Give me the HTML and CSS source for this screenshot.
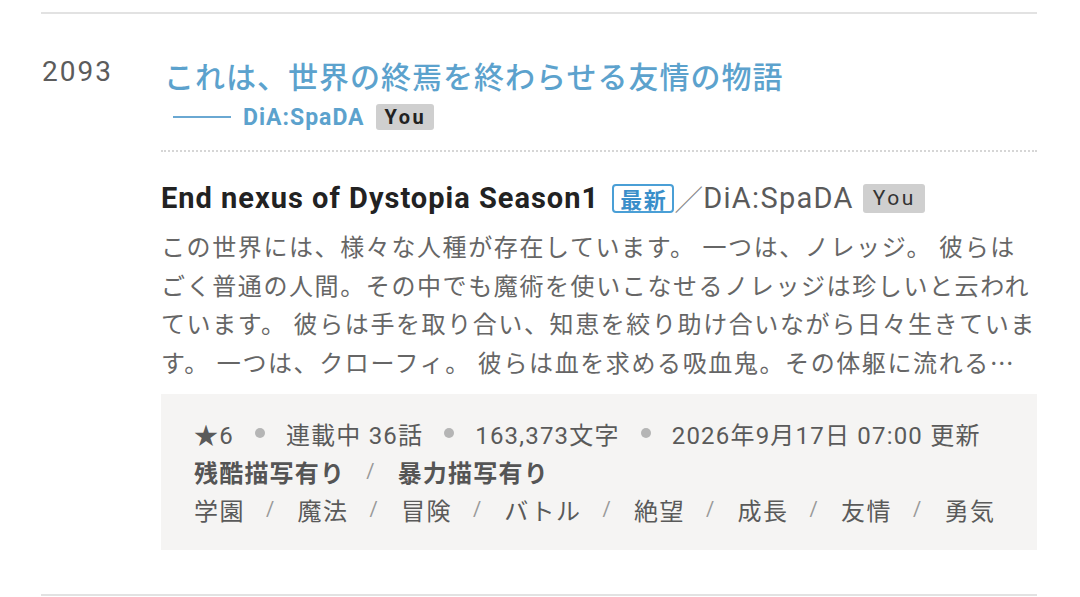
FILE: index.html
```html
<!DOCTYPE html>
<html lang="ja">
<head>
<meta charset="utf-8">
<link rel="stylesheet" href="styles.css">
</head>
<body>
<div class="list">
  <div class="item">
    <div class="rank">2093</div>
    <div class="main">
      <div class="head">
        <div class="title">これは、世界の終焉を終わらせる友情の物語</div>
        <div class="author-line">
          <span class="dash"></span>
          <span class="author">DiA:SpaDA</span>
          <span class="you you-bold">You</span>
        </div>
      </div>
      <div class="work">
        <div class="work-title">
          <span class="work-name">End nexus of Dystopia Season1</span>
          <span class="new">最新</span>
          <span class="slash">／</span>
          <span class="work-author">DiA:SpaDA</span>
          <span class="you">You</span>
        </div>
        <p class="desc">この世界には、様々な人種が存在しています。 一つは、ノレッジ。 彼らはごく普通の人間。その中でも魔術を使いこなせるノレッジは珍しいと云われています。 彼らは手を取り合い、知恵を絞り助け合いながら日々生きています。 一つは、クローフィ。 彼らは血を求める吸血鬼。その体躯に流れる血は彼らの力の源であり、決して絶やしてはならないものです。</p>
        <div class="meta">
          <div class="meta-line">
            <span>★6</span><span class="dot"></span><span>連載中 36話</span><span class="dot"></span><span>163,373文字</span><span class="dot"></span><span>2026年9月17日 07:00&nbsp;更新</span>
          </div>
          <div class="meta-line warn">
            <span>残酷描写有り</span><span class="sep">/</span><span>暴力描写有り</span>
          </div>
          <div class="meta-line tags">
            <span>学園</span><span class="sep">/</span><span>魔法</span><span class="sep">/</span><span>冒険</span><span class="sep">/</span><span>バトル</span><span class="sep">/</span><span>絶望</span><span class="sep">/</span><span>成長</span><span class="sep">/</span><span>友情</span><span class="sep">/</span><span>勇気</span>
          </div>
        </div>
      </div>
    </div>
  </div>
</div>
</body>
</html>
```

FILE: styles.css
```css
html, body {
  margin: 0;
  padding: 0;
  background: #ffffff;
}
body {
  font-family: Roboto, "Noto Sans CJK JP", sans-serif;
  color: #555;
}
.list {
  margin: 12px 43px 0 41px;
  border-top: 2px solid #e2e2e2;
  border-bottom: 2px solid #e2e2e2;
}
.item {
  display: flex;
  padding: 41px 0 44px;
}
.rank {
  width: 119px;
  flex: none;
  font-size: 28px;
  line-height: 40px;
  letter-spacing: 2px;
  color: #5c5c5c;
  padding-left: 1px;
  margin-top: -3px;
}
.main {
  flex: 1;
  min-width: 0;
}
.head {
  border-bottom: 2px dotted #d6d6d6;
  padding-bottom: 18px;
}
.title {
  font-family: "Noto Sans CJK JP", sans-serif;
  font-weight: 500;
  font-size: 30px;
  line-height: 40px;
  letter-spacing: 1px;
  color: #5ca2cd;
  padding-left: 3px;
}
.author-line {
  display: flex;
  align-items: center;
  margin-top: 7px;
  height: 30px;
}
.dash {
  display: inline-block;
  width: 58px;
  height: 0;
  border-top: 2px solid #6aa8d2;
  margin-left: 12px;
  margin-right: 12px;
}
.author {
  font-family: Roboto, sans-serif;
  font-weight: 700;
  font-size: 23px;
  color: #5ca2cd;
  letter-spacing: 1px;
}
.you {
  display: inline-block;
  background: #cfcfcf;
  color: #333;
  font-family: Roboto, sans-serif;
  font-size: 21px;
  line-height: 29px;
  padding: 0 9px 0 10px;
  letter-spacing: 2.5px;
  border-radius: 3px;
  margin-left: 11px;
}
.you-bold {
  font-weight: 700;
  color: #222;
  line-height: 26px;
  font-size: 20px;
  padding: 0 8px 0 9px;
}
.work {
  padding-top: 26px;
}
.work-title {
  display: flex;
  align-items: center;
  height: 40px;
}
.work-name {
  font-weight: 700;
  font-size: 29px;
  letter-spacing: 1px;
  color: #222;
}
.new {
  display: inline-block;
  font-family: "Noto Sans CJK JP", sans-serif;
  font-weight: 700;
  font-size: 22px;
  line-height: 25px;
  color: #3a8fca;
  border: 2px solid #4a9fd6;
  border-radius: 4px;
  padding: 0 5px 0 6px;
  margin-left: 13px;
  letter-spacing: 1.5px;
}
.slash {
  font-family: "Noto Sans CJK JP", sans-serif;
  font-size: 29px;
  color: #888;
  font-weight: 300;
  margin-left: 0;
}
.work-author {
  font-size: 29px;
  color: #5a5a5a;
  letter-spacing: 1.3px;
}
.work-title .you {
  margin-left: 9px;
}
.desc {
  margin: 9px 0 0;
  font-family: "Noto Sans CJK JP", sans-serif;
  font-size: 24px;
  line-height: 38.5px;
  letter-spacing: 1.6px;
  color: #666;
  display: -webkit-box;
  -webkit-line-clamp: 4;
  -webkit-box-orient: vertical;
  overflow: hidden;
}
.meta {
  margin-top: 13px;
  background: #f5f4f3;
  padding: 20px 20px 22px 33px;
}
.meta-line {
  display: flex;
  align-items: center;
  height: 38px;
  font-size: 24px;
  letter-spacing: 1.2px;
  color: #5a5a5a;
  white-space: nowrap;
}
.dot {
  display: inline-block;
  width: 10px;
  height: 10px;
  border-radius: 50%;
  background: #b5b5b5;
  margin: 0 21px;
}
.warn {
  font-weight: 700;
  color: #555;
}
.sep {
  font-weight: 400;
  font-size: 20px;
  color: #999;
  margin: 0 22px 0 21px;
}
.tags span:not(.sep) {
  letter-spacing: 1.5px;
}
```
